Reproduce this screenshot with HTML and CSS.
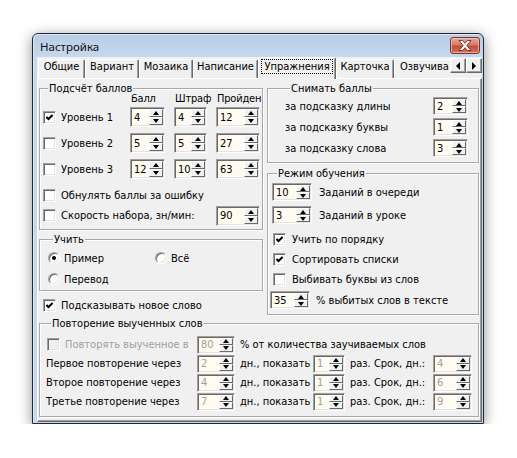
FILE: index.html
```html
<!DOCTYPE html>
<html lang="ru">
<head>
<meta charset="utf-8">
<title>Настройка</title>
<link rel="stylesheet" href="styles.css">
</head>
<body>
<div class="window">
  <div class="titlebar">
    <span class="title">Настройка</span>
    <div class="close">
      <svg width="14" height="11" viewBox="0 0 14 11"><path d="M1 0.5 H4.5 L7 3.3 L9.5 0.5 H13 L8.8 5.5 L13 10.5 H9.5 L7 7.7 L4.5 10.5 H1 L5.2 5.5 Z" fill="#fff" stroke="#6b2b22" stroke-width="0.9" stroke-linejoin="round"/></svg>
    </div>
  </div>
  <div class="client">
    <div class="tabstrip">
      <div class="tabs">
        <div class="tab t1">Общие</div>
        <div class="tab t2">Вариант</div>
        <div class="tab t3">Мозаика</div>
        <div class="tab t4">Написание</div>
        <div class="tab t5 sel"><span class="focus">Упражнения</span></div>
        <div class="tab t6">Карточка</div>
        <div class="tab t7">Озвучива</div>
      </div>
      <div class="arrows">
        <div class="arr"><i class="tri-l"></i></div>
        <div class="arr"><i class="tri-r"></i></div>
      </div>
    </div>
    <div class="page">
      <div class="top">
        <div class="col">
          <div class="group g-score">
            <div class="gt">Подсчёт баллов</div>
            <div class="srow hdr"><span></span><span>Балл</span><span>Штраф</span><span>Пройден</span></div>
            <div class="srow r1">
              <label class="chk"><span class="cb"><svg width="7" height="7" viewBox="0 0 7 7"><polyline points="0.4,2.9 2.5,5 6.6,0.9" fill="none" stroke="#000" stroke-width="2"/></svg></span>Уровень 1</label>
              <div class="spin"><span class="v">4</span><span class="sb"><i class="up"></i><i class="dn"></i></span></div>
              <div class="spin"><span class="v">4</span><span class="sb"><i class="up"></i><i class="dn"></i></span></div>
              <div class="spin"><span class="v">12</span><span class="sb"><i class="up"></i><i class="dn"></i></span></div>
            </div>
            <div class="srow r2">
              <label class="chk"><span class="cb"></span>Уровень 2</label>
              <div class="spin"><span class="v">5</span><span class="sb"><i class="up"></i><i class="dn"></i></span></div>
              <div class="spin"><span class="v">5</span><span class="sb"><i class="up"></i><i class="dn"></i></span></div>
              <div class="spin"><span class="v">27</span><span class="sb"><i class="up"></i><i class="dn"></i></span></div>
            </div>
            <div class="srow r3">
              <label class="chk"><span class="cb"></span>Уровень 3</label>
              <div class="spin"><span class="v">12</span><span class="sb"><i class="up"></i><i class="dn"></i></span></div>
              <div class="spin"><span class="v">10</span><span class="sb"><i class="up"></i><i class="dn"></i></span></div>
              <div class="spin"><span class="v">63</span><span class="sb"><i class="up"></i><i class="dn"></i></span></div>
            </div>
            <div class="srow r4">
              <label class="chk wide"><span class="cb"></span>Обнулять баллы за ошибку</label>
            </div>
            <div class="srow r5">
              <label class="chk wide"><span class="cb"></span>Скорость набора, зн/мин:</label>
              <div class="spin"><span class="v">90</span><span class="sb"><i class="up"></i><i class="dn"></i></span></div>
            </div>
          </div>

          <div class="group g-learn">
            <div class="gt">Учить</div>
            <div class="lrow l1">
              <label class="rad"><span class="rb on"></span>Пример</label>
              <label class="rad"><span class="rb"></span>Всё</label>
            </div>
            <div class="lrow l2">
              <label class="rad"><span class="rb"></span>Перевод</label>
            </div>
          </div>

          <label class="chk hint"><span class="cb"><svg width="7" height="7" viewBox="0 0 7 7"><polyline points="0.4,2.9 2.5,5 6.6,0.9" fill="none" stroke="#000" stroke-width="2"/></svg></span>Подсказывать новое слово</label>
        </div>

        <div class="col">
          <div class="group g-pen">
            <div class="gt">Снимать баллы</div>
            <div class="prow p1"><span>за подсказку длины</span><div class="spin"><span class="v">2</span><span class="sb"><i class="up"></i><i class="dn"></i></span></div></div>
            <div class="prow"><span>за подсказку буквы</span><div class="spin"><span class="v">1</span><span class="sb"><i class="up"></i><i class="dn"></i></span></div></div>
            <div class="prow"><span>за подсказку слова</span><div class="spin"><span class="v">3</span><span class="sb"><i class="up"></i><i class="dn"></i></span></div></div>
          </div>

          <div class="group g-mode">
            <div class="gt">Режим обучения</div>
            <div class="mrow m1"><div class="spin"><span class="v">10</span><span class="sb"><i class="up"></i><i class="dn"></i></span></div><span>Заданий в очереди</span></div>
            <div class="mrow m2"><div class="spin"><span class="v">3</span><span class="sb"><i class="up"></i><i class="dn"></i></span></div><span>Заданий в уроке</span></div>
            <label class="chk mc mc1"><span class="cb"><svg width="7" height="7" viewBox="0 0 7 7"><polyline points="0.4,2.9 2.5,5 6.6,0.9" fill="none" stroke="#000" stroke-width="2"/></svg></span>Учить по порядку</label>
            <label class="chk mc"><span class="cb"><svg width="7" height="7" viewBox="0 0 7 7"><polyline points="0.4,2.9 2.5,5 6.6,0.9" fill="none" stroke="#000" stroke-width="2"/></svg></span>Сортировать списки</label>
            <label class="chk mc"><span class="cb"></span>Выбивать буквы из слов</label>
            <div class="mrow m3"><div class="spin"><span class="v">35</span><span class="sb"><i class="up"></i><i class="dn"></i></span></div><span>% выбитых слов в тексте</span></div>
          </div>
        </div>
      </div>

      <div class="group g-rep">
        <div class="gt">Повторение выученных слов</div>
        <div class="rrow rr1">
          <label class="chk dis"><span class="cb"></span>Повторять выученное в</label>
          <div class="spin dis"><span class="v">80</span><span class="sb"><i class="up"></i><i class="dn"></i></span></div>
          <span class="txt span4">% от количества заучиваемых слов</span>
        </div>
        <div class="rrow">
          <span>Первое повторение через</span>
          <div class="spin dis"><span class="v">2</span><span class="sb"><i class="up"></i><i class="dn"></i></span></div>
          <span class="txt">дн., показать</span>
          <div class="spin dis"><span class="v">1</span><span class="sb"><i class="up"></i><i class="dn"></i></span></div>
          <span class="txt">раз. Срок, дн.:</span>
          <div class="spin dis"><span class="v">4</span><span class="sb"><i class="up"></i><i class="dn"></i></span></div>
        </div>
        <div class="rrow">
          <span>Второе повторение через</span>
          <div class="spin dis"><span class="v">4</span><span class="sb"><i class="up"></i><i class="dn"></i></span></div>
          <span class="txt">дн., показать</span>
          <div class="spin dis"><span class="v">1</span><span class="sb"><i class="up"></i><i class="dn"></i></span></div>
          <span class="txt">раз. Срок, дн.:</span>
          <div class="spin dis"><span class="v">6</span><span class="sb"><i class="up"></i><i class="dn"></i></span></div>
        </div>
        <div class="rrow">
          <span>Третье повторение через</span>
          <div class="spin dis"><span class="v">7</span><span class="sb"><i class="up"></i><i class="dn"></i></span></div>
          <span class="txt">дн., показать</span>
          <div class="spin dis"><span class="v">1</span><span class="sb"><i class="up"></i><i class="dn"></i></span></div>
          <span class="txt">раз. Срок, дн.:</span>
          <div class="spin dis"><span class="v">9</span><span class="sb"><i class="up"></i><i class="dn"></i></span></div>
        </div>
      </div>
    </div>
  </div>
</div>
</body>
</html>
```

FILE: styles.css
```css
* { box-sizing: border-box; }
html, body { margin: 0; padding: 0; background: #fff; }
body {
  font-family: "DejaVu Sans Condensed", "DejaVu Sans", sans-serif;
  font-stretch: condensed;
  font-size: 11px;
  line-height: 13px;
  color: #000;
}

/* ---------- window frame ---------- */
.window {
  margin: 33px 0 0 32px;
  width: 452px;
  height: 391px;
  border: 1px solid #1e2a36;
  border-radius: 6px 6px 0 0;
  background: linear-gradient(#b8cde6, #c6d8ee 24px, #c4d7ed);
  box-shadow: 0 1px 0 #62cdee, 0 3px 14px rgba(0,0,0,0.45), inset 1px 1px 0 #dce8f6;
  display: flex;
  flex-direction: column;
  padding: 0 1px 1px 4px;
}
.titlebar {
  height: 23px;
  flex: none;
  display: flex;
  align-items: flex-start;
  justify-content: space-between;
  padding: 0 2px 0 3px;
}
.title {
  font-family: "Noto Sans", "Open Sans", sans-serif;
  font-stretch: normal;
  font-size: 11.5px;
  line-height: 16px;
  margin-top: 5px;
  color: #111;
}
.close {
  width: 30px;
  height: 17px;
  margin-top: 3px;
  border: 1px solid #7a3528;
  border-radius: 3px;
  background: linear-gradient(#e9a99a, #d57a67 45%, #c14f3b 55%, #d0705c);
  box-shadow: inset 0 0 0 1px rgba(255,220,210,0.55);
  display: flex;
  align-items: center;
  justify-content: center;
}
.client {
  flex: 1;
  background: #f0f0f0;
  display: flex;
  flex-direction: column;
}

/* ---------- tabs ---------- */
.tabstrip {
  height: 22px;
  flex: none;
  display: flex;
  position: relative;
  z-index: 2;
}
.tabs {
  flex: 1;
  display: flex;
  align-items: flex-end;
  overflow: hidden;
  padding-left: 1px;
  min-width: 0;
}
.tab {
  flex: none;
  height: 19px;
  margin-bottom: 1px;
  background: #f0f0f0;
  border-left: 1px solid #fff;
  border-top: 1px solid #fff;
  border-right: 1px solid #696969;
  box-shadow: inset -1px 0 0 #a0a0a0;
  border-radius: 2px 2px 0 0;
  text-align: center;
  white-space: nowrap;
}
.t1 { width: 47px; }
.t2 { width: 54px; }
.t3 { width: 54px; }
.t4 { width: 65px; }
.t5 { width: 78px; }
.t6 { width: 58px; }
.t7 { width: 70px; text-align: left; padding-left: 5px; }
.tab.sel {
  height: 22px;
  margin-bottom: 0;
  padding-top: 1px;
}
.focus {
  display: inline-block;
  border: 1px dotted #000;
  padding: 0 2px;
}
.arrows {
  flex: none;
  display: flex;
  margin-top: 1px;
}
.arr {
  width: 16px;
  height: 15px;
  background: #f0f0f0;
  border: 1px solid;
  border-color: #fff #696969 #696969 #fff;
  box-shadow: inset -1px -1px 0 #a0a0a0;
  display: flex;
  align-items: center;
  justify-content: center;
}
.tri-l, .tri-r { width: 0; height: 0; border-top: 4px solid transparent; border-bottom: 4px solid transparent; }
.tri-l { border-right: 4px solid #000; }
.tri-r { border-left: 4px solid #000; }

/* ---------- page ---------- */
.page {
  flex: 1;
  margin-top: -1px;
  border: 1px solid;
  border-color: #fff #696969 #696969 #fff;
  box-shadow: inset -1px -1px 0 #a0a0a0;
  padding: 9px 2px 0 1px;
}
.top {
  display: grid;
  grid-template-columns: 224px 212px;
  column-gap: 4px;
}
.col { display: flex; flex-direction: column; }

.group {
  border: 1px solid #a8a8a8;
  box-shadow: inset 1px 1px 0 #fff, 1px 1px 0 #fff;
}
.gt {
  width: fit-content;
  margin: -7px 0 -6px 5px;
  padding: 0 1px;
  background: #f0f0f0;
  position: relative;
}

/* controls */
.chk, .rad { display: flex; align-items: center; white-space: nowrap; }
.cb {
  flex: none;
  width: 13px;
  height: 13px;
  margin-right: 5px;
  background: #fff;
  border: 1px solid;
  border-color: #a0a0a0 #fff #fff #a0a0a0;
  box-shadow: inset 1px 1px 0 #696969, inset -1px -1px 0 #e3e3e3;
  display: flex;
  align-items: center;
  justify-content: center;
}
.rb {
  flex: none;
  width: 12px;
  height: 12px;
  margin-right: 4px;
  border-radius: 50%;
  background: #fff;
  border: 1px solid;
  border-color: #a0a0a0 #fff #fff #a0a0a0;
  box-shadow: inset 1px 1px 0 #696969, inset -1px -1px 0 #e3e3e3;
  display: flex;
  align-items: center;
  justify-content: center;
}
.rb.on::after {
  content: "";
  width: 4px;
  height: 4px;
  border-radius: 50%;
  background: #000;
}
.spin {
  display: flex;
  height: 20px;
  background: #fffbf0;
  border: 1px solid;
  border-color: #a0a0a0 #fff #fff #a0a0a0;
  box-shadow: inset 1px 1px 0 #696969, inset -1px -1px 0 #e3e3e3;
  padding: 1px;
}
.v { flex: 1; display: flex; align-items: center; padding-left: 2px; }
.sb { flex: none; width: 14px; display: flex; flex-direction: column; }
.sb i {
  flex: 1;
  background: #f0f0f0;
  border: 1px solid;
  border-color: #fff #696969 #696969 #fff;
  display: flex;
  align-items: center;
  justify-content: center;
}
.sb i::after { content: ""; width: 0; height: 0; border-left: 3.5px solid transparent; border-right: 3.5px solid transparent; }
.sb .up::after { border-bottom: 4px solid #000; }
.sb .dn::after { border-top: 4px solid #000; }
.dis .v, .chk.dis { color: #a0a0a0; }
.chk.dis .cb { background: #f0f0f0; }

/* score group */
.g-score { height: 142px; padding-left: 3px; }
.srow {
  display: grid;
  grid-template-columns: 78px 35px 33px 44px;
  column-gap: 9px;
  align-items: center;
}
.srow.hdr { margin-top: 3px; height: 13px; letter-spacing: -0.2px; }
.srow.hdr span { padding-left: 1px; white-space: nowrap; }
.srow.r1 { margin-top: 2px; height: 20px; }
.srow.r2, .srow.r3 { margin-top: 6px; height: 20px; }
.srow.r4 { margin-top: 6px; height: 20px; }
.srow.r5 { height: 21px; }
.chk.wide { grid-column: 1 / 4; }
.srow.r5 .spin { grid-column: 4; }

/* learn group */
.g-learn { height: 52px; margin-top: 9px; padding-left: 8px; }
.lrow { display: grid; grid-template-columns: 107px auto; height: 18px; align-items: center; }
.lrow.l1 { margin-top: 9px; }
.lrow.l2 { margin-top: 3px; }
.hint { margin-top: 4px; height: 20px; padding-left: 4px; }

/* penalty group */
.g-pen { height: 75px; padding-left: 17px; }
.prow { display: grid; grid-template-columns: 148px 35px; height: 18px; align-items: center; margin-top: 3px; }
.prow.p1 { margin-top: 8px; }
.prow .spin { height: 18px; }

/* mode group */
.g-mode { height: 142px; margin-top: 10px; padding-left: 4px; }
.mrow { display: flex; align-items: center; height: 18px; }
.mrow .spin { width: 40px; height: 18px; margin-right: 7px; }
.mrow.m1 { margin-top: 9px; }
.mrow.m2 { margin-top: 5px; }
.mrow.m3 { margin-top: 2px; margin-left: -2px; }
.mrow.m3 .spin { margin-right: 6px; }
.chk.mc { height: 19px; margin-top: 1px; padding-left: 1px; }
.chk.mc .cb { margin-right: 6px; }
.chk.mc1 { margin-top: 6px; }

/* repetition group */
.g-rep { height: 94px; margin-top: 8px; padding-left: 6px; }
.rrow {
  display: grid;
  grid-template-columns: 151px 38px 78px 32px 88px 39px;
  height: 19px;
  align-items: center;
  white-space: nowrap;
}
.rrow.rr1 { margin-top: 11px; }
.rrow .spin { height: 18px; }
.rrow .txt { padding-left: 5px; }
.span4 { grid-column: 3 / 7; }
.rr1 .chk { padding-left: 1px; }
```
